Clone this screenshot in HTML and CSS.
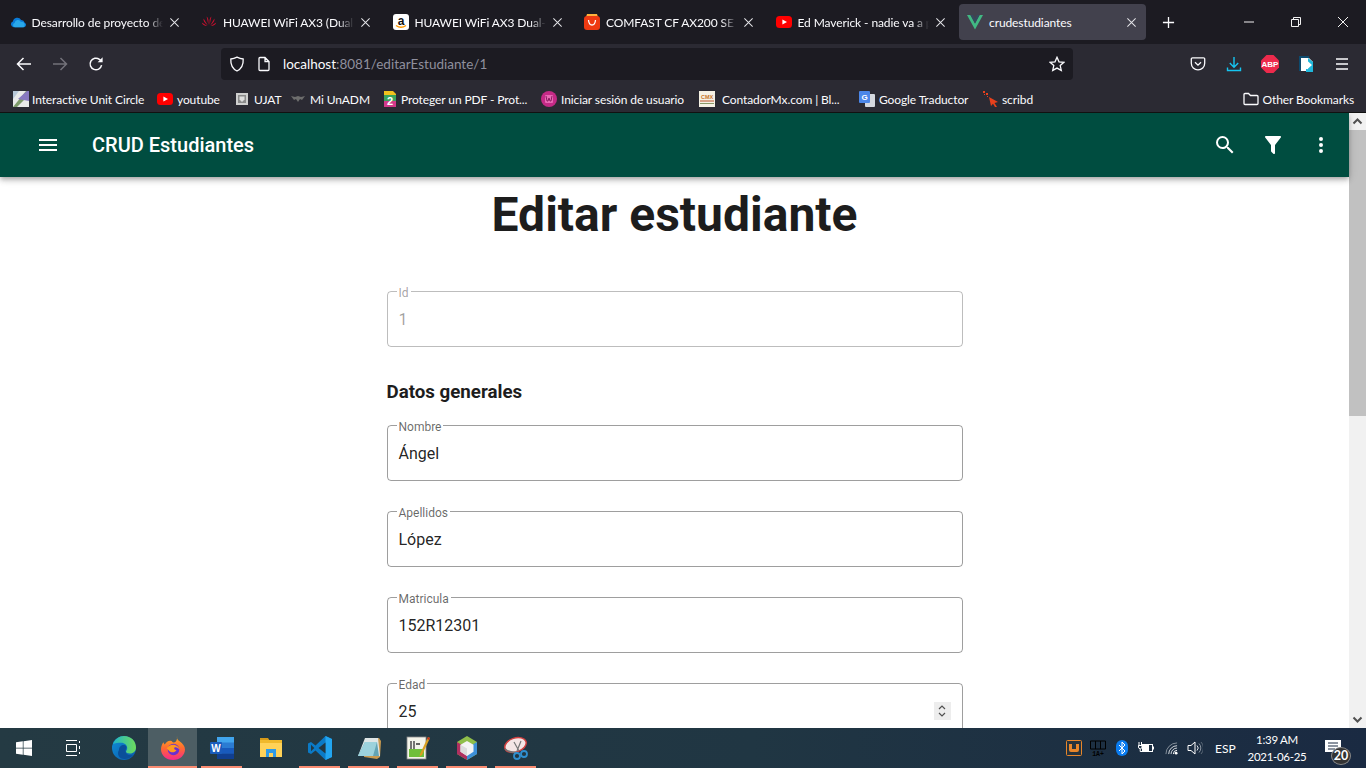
FILE: index.html
```html
<!DOCTYPE html>
<html lang="es">
<head>
<meta charset="utf-8">
<title>crudestudiantes</title>
<link rel="stylesheet" href="styles.css">
</head>
<body>
<div class="browser">
  <div class="tabbar">
    <div class="tabs">
      <div class="tab">
        <svg class="fav" viewBox="0 0 16 16"><path fill="#0a7bd8" d="M3.600 13.200A3 3 0 0 1 2.900 7.400a4.400 4.400 0 0 1 8.200-1.300 3.600 3.600 0 0 1 3.600 2.600 2.400 2.400 0 0 1-.6 4.500z"/><path fill="#29a8ea" d="M5 13.200a2.200 2.200 0 0 1-.4-4.300 3.300 3.300 0 0 1 6.300-.9 2.700 2.700 0 0 1 3.800 2.400 2.400 2.400 0 0 1-1.300 2.800z"/></svg>
        <span class="tab-title">Desarrollo de proyecto de</span>
        <svg class="tab-x" viewBox="0 0 12 12"><path d="M1.500 1.500l9 9M10.500 1.500l-9 9"/></svg>
      </div>
      <div class="tab">
        <svg class="fav" viewBox="0 0 16 16"><g fill="#c7102e"><path d="M7.400 11L5.600 2.600Q7 3.400 7.400 6z"/><path d="M8.600 11l1.800-8.400Q9 3.400 8.600 6z"/><path d="M6.800 11.400L2.600 4.600Q1.600 7.600 6.800 11.400z"/><path d="M9.200 11.400l4.200-6.800q1 3-4.200 6.800z"/><path d="M6.200 12L.8 8.600Q1.600 12 6.200 12z"/><path d="M9.800 12l5.400-3.400Q14.400 12 9.800 12z"/></g></svg>
        <span class="tab-title">HUAWEI WiFi AX3 (Dual-C</span>
        <svg class="tab-x" viewBox="0 0 12 12"><path d="M1.500 1.500l9 9M10.500 1.500l-9 9"/></svg>
      </div>
      <div class="tab">
        <svg class="fav" viewBox="0 0 16 16"><rect width="16" height="16" rx="3" fill="#fff"/><text x="8" y="10.500" font-size="12" font-weight="700" text-anchor="middle" font-family="Liberation Sans" fill="#111">a</text><path d="M3 11.500q5 3.400 10 0" fill="none" stroke="#f90" stroke-width="1.500"/></svg>
        <span class="tab-title">HUAWEI WiFi AX3 Dual-C</span>
        <svg class="tab-x" viewBox="0 0 12 12"><path d="M1.500 1.500l9 9M10.500 1.500l-9 9"/></svg>
      </div>
      <div class="tab">
        <svg class="fav" viewBox="0 0 16 16"><path d="M3 0h10l1 3H2z" fill="#ffb13d"/><rect y="2" width="16" height="14" rx="3" fill="#ee3a12"/><path d="M4.500 6q.4 5 3.500 5t3.500-5" fill="none" stroke="#fff" stroke-width="1.300"/></svg>
        <span class="tab-title">COMFAST CF AX200 SE 30</span>
        <svg class="tab-x" viewBox="0 0 12 12"><path d="M1.500 1.500l9 9M10.500 1.500l-9 9"/></svg>
      </div>
      <div class="tab">
        <svg class="fav" viewBox="0 0 16 16"><rect y="2" width="16" height="12" rx="3.500" fill="#f00"/><path d="M6.400 5.400L11 8l-4.600 2.600z" fill="#fff"/></svg>
        <span class="tab-title">Ed Maverick - nadie va a p</span>
        <svg class="tab-x" viewBox="0 0 12 12"><path d="M1.500 1.500l9 9M10.500 1.500l-9 9"/></svg>
      </div>
      <div class="tab tab-active">
        <svg class="fav" viewBox="0 0 16 16"><path d="M0 1h3.400L8 9.600 12.600 1H16L8 15.400z" fill="#41b883"/><path d="M3.400 1h2.600L8 4.800 10 1h2.600L8 9.600z" fill="#35495e"/></svg>
        <span class="tab-title">crudestudiantes</span>
        <svg class="tab-x" viewBox="0 0 12 12"><path d="M1.500 1.500l9 9M10.500 1.500l-9 9"/></svg>
      </div>
    </div>
    <svg class="newtab" viewBox="0 0 14 14"><path d="M7 1v12M1 7h12"/></svg>
    <div class="winctl">
      <svg viewBox="0 0 12 12"><path d="M1 6h10"/></svg>
      <svg viewBox="0 0 12 12"><path d="M1.500 3.500h7v7h-7zM3.500 3.500v-2h7v7h-2"/></svg>
      <svg viewBox="0 0 12 12"><path d="M1 1l10 10M11 1L1 11"/></svg>
    </div>
  </div>

  <div class="toolbar">
    <div class="navbtns">
      <svg viewBox="0 0 16 16"><path d="M15 8H1.500M7.500 2L1.500 8l6 6"/></svg>
      <svg class="dim" viewBox="0 0 16 16"><path d="M1 8h13.500M8.500 2l6 6-6 6"/></svg>
      <svg viewBox="0 0 16 16"><path d="M13.600 9.200A5.800 5.800 0 1 1 11.400 3.300L13.400 5"/><path class="solid" d="M14.600 1.200v5H9.600z"/></svg>
    </div>
    <div class="urlbar">
      <svg class="url-ico" viewBox="0 0 16 16"><path d="M8 1.200c2 1 4 1.600 6.200 1.800.3 5.800-1.700 9.800-6.200 12-4.500-2.200-6.500-6.200-6.200-12C4 2.800 6 2.200 8 1.200z"/></svg>
      <svg class="url-ico" viewBox="0 0 16 16"><path d="M3 2.500a1 1 0 0 1 1-1h5l4 4V13.500a1 1 0 0 1-1 1H4a1 1 0 0 1-1-1zM9 1.500v4h4"/></svg>
      <div class="url"><span class="host">localhost</span>:8081/editarEstudiante/1</div>
      <svg class="url-ico" viewBox="0 0 16 16"><path d="M8 1.300l2 4.500 4.900.5-3.700 3.300 1.100 4.800L8 12.100l-4.300 2.300 1.100-4.800L1.100 6.300 6 5.800z"/></svg>
    </div>
    <div class="extbtns">
      <svg viewBox="0 0 16 16"><path class="ln" d="M2.500 1.800h11a1.200 1.200 0 0 1 1.200 1.200V7.200A6.700 6.700 0 0 1 1.300 7.200V3a1.200 1.200 0 0 1 1.200-1.200zM5 6.200l3 3 3-3"/></svg>
      <svg viewBox="0 0 16 16"><path d="M8 1v10M3.800 7L8 11.200 12.200 7M1.500 11.500v3h13v-3" fill="none" stroke="#16c4f0" stroke-width="1.400"/></svg>
      <svg class="abp" viewBox="0 0 18 18"><path d="M5.500 0h7L18 5.500v7L12.500 18h-7L0 12.500v-7z" fill="#ed2a4c"/><text x="9" y="12.200" font-size="8" font-weight="700" text-anchor="middle" font-family="Liberation Sans" fill="#fff">ABP</text></svg>
      <svg viewBox="0 0 16 16"><path d="M1 0h10v2H3v13H1z" fill="#0d4a6e"/><path d="M3 2h8l4 4v9H3z" fill="#fff"/><path d="M10 2l5 4v10H8v-3h2V2z" fill="#1fb8dc"/><path d="M4 7h5V4.500L14 9l-5 4.500V11H4z" fill="#fff"/></svg>
      <svg viewBox="0 0 16 16"><path class="ln" d="M2 3h12M2 8h12M2 13h12"/></svg>
    </div>
  </div>

  <div class="bookmarks">
    <div class="bm">
      <svg viewBox="0 0 16 16"><rect width="16" height="16" fill="#e9e9e9"/><path d="M0 16L13 0h3v4L4 16z" fill="#7d9a6a"/><path d="M5 8l9-8h2v10z" fill="#8878c0"/><path d="M0 0h6L0 8z" fill="#b8c8d8"/></svg>
      <span>Interactive Unit Circle</span>
    </div>
    <div class="bm">
      <svg viewBox="0 0 16 16"><rect y="2" width="16" height="12" rx="3.500" fill="#f00"/><path d="M6.400 5.400L11 8l-4.600 2.600z" fill="#fff"/></svg>
      <span>youtube</span>
    </div>
    <div class="bm">
      <svg class="small" viewBox="0 0 12 12"><rect width="12" height="12" fill="#cfcfcf"/><rect x="2" y="2" width="8" height="8" fill="#8a8a8a"/><path d="M3.500 3.500h5v3L6 9 3.500 6.500z" fill="#dedede"/></svg>
      <span>UJAT</span>
    </div>
    <div class="bm">
      <svg class="small" viewBox="0 0 14 12"><path d="M0 3l4 1 3-1 3 1 4-1-3 4-2-1-2 3-2-3-2 1z" fill="#6d6d6d"/></svg>
      <span>Mi UnADM</span>
    </div>
    <div class="bm">
      <svg viewBox="0 0 16 16"><path d="M2 0h9l3 3v13H2z" fill="#f2c11d"/><rect x="2" y="4" width="12" height="12" fill="#3aa35c"/><path d="M2 10h12v6H2z" fill="#d23a8a"/><text x="8" y="14" font-size="11" font-weight="700" text-anchor="middle" font-family="Liberation Sans" fill="#fff">2</text></svg>
      <span>Proteger un PDF - Prot...</span>
    </div>
    <div class="bm">
      <svg viewBox="0 0 16 16"><circle cx="8" cy="8" r="8" fill="#c42a86"/><rect x="4" y="4" width="8" height="8" rx="1" fill="#e868b4"/><path d="M5 5l1 5h1l1-3 1 3h1l1-5" fill="none" stroke="#8a1c60" stroke-width="1"/></svg>
      <span>Iniciar sesión de usuario</span>
    </div>
    <div class="bm">
      <svg viewBox="0 0 16 16"><rect width="16" height="16" fill="#f5f1e4"/><text x="8" y="7.500" font-size="5.500" font-weight="700" text-anchor="middle" font-family="Liberation Sans" fill="#c8742a">CMX</text><path d="M1 10h14" stroke="#b8502a"/><path d="M1 12.500h14" stroke="#8a9a6a"/></svg>
      <span>ContadorMx.com | Bl...</span>
    </div>
    <div class="bm">
      <svg viewBox="0 0 16 16"><rect x="6" y="3" width="10" height="13" rx="1" fill="#d5d8de"/><rect width="11" height="12" rx="1" fill="#4b86e8"/><text x="5.500" y="9" font-size="8" font-weight="700" text-anchor="middle" font-family="Liberation Sans" fill="#fff">G</text></svg>
      <span>Google Traductor</span>
    </div>
    <div class="bm">
      <svg viewBox="0 0 16 16"><path d="M6 6l9 5-3.500 1L14 16h-2l-2-3.200L8 15z" fill="#e8401c"/><path d="M0 0h2v2H0zM3 2h2v2H3zM1 3h1v1H1zM4 5h1v1H4z" fill="#e8401c"/></svg>
      <span>scribd</span>
    </div>
    <div class="bm bm-other">
      <svg viewBox="0 0 16 16"><path class="ln" d="M1 12.500V3.500A1 1 0 0 1 2 2.500h3.500l2 2H14a1 1 0 0 1 1 1v7a1 1 0 0 1-1 1H2a1 1 0 0 1-1-1z"/></svg>
      <span>Other Bookmarks</span>
    </div>
  </div>
</div>

<div class="viewport">
  <div class="page">
    <header class="appbar">
      <svg class="menu-ic" viewBox="0 0 24 24"><path d="M3 18h18v-2H3zm0-5h18v-2H3zm0-7v2h18V6z"/></svg>
      <div class="app-title">CRUD Estudiantes</div>
      <div class="app-actions">
        <svg viewBox="0 0 24 24"><path d="M15.500 14h-.79l-.28-.27A6.470 6.470 0 0 0 16 9.500 6.500 6.500 0 1 0 9.500 16c1.610 0 3.090-.59 4.230-1.570l.27.28v.79l5 4.990L20.490 19zm-6 0C7.010 14 5 11.990 5 9.500S7.010 5 9.500 5 14 7.010 14 9.500 11.990 14 9.500 14z"/></svg>
        <svg viewBox="0 0 24 24"><path d="M14 12v7.880c.04.3-.06.62-.29.830a1 1 0 0 1-1.410 0l-2.010-2.010a1 1 0 0 1-.29-.830V12h-.03L4.210 4.620a1 1 0 0 1 .17-1.400C4.570 3.080 4.780 3 5 3h14c.22 0 .43.080.62.220a1 1 0 0 1 .17 1.400L14.030 12z"/></svg>
        <svg viewBox="0 0 24 24"><path d="M12 16a2 2 0 1 1 0 4 2 2 0 0 1 0-4zm0-6a2 2 0 1 1 0 4 2 2 0 0 1 0-4zm0-6a2 2 0 1 1 0 4 2 2 0 0 1 0-4z"/></svg>
      </div>
    </header>
    <main class="content">
      <h1 class="title">Editar estudiante</h1>
      <div class="form">
        <div class="field field-disabled">
          <label>Id</label>
          <div class="value">1</div>
        </div>
        <h2 class="section">Datos generales</h2>
        <div class="field"><label>Nombre</label><div class="value">Ángel</div></div>
        <div class="field"><label>Apellidos</label><div class="value">López</div></div>
        <div class="field"><label>Matricula</label><div class="value">152R12301</div></div>
        <div class="field">
          <label>Edad</label>
          <div class="value">25</div>
          <div class="spinner">
            <svg viewBox="0 0 10 18"><path d="M2 7l3-3 3 3M2 11l3 3 3-3"/></svg>
          </div>
        </div>
      </div>
    </main>
  </div>
  <div class="scrollbar">
    <svg class="sb-arrow" viewBox="0 0 17 17"><path d="M4.500 10.500l4-4 4 4"/></svg>
    <div class="sb-track"><div class="sb-thumb"></div></div>
    <svg class="sb-arrow" viewBox="0 0 17 17"><path d="M4.500 6.500l4 4 4-4"/></svg>
  </div>
</div>

<footer class="taskbar">
  <div class="task-start">
    <div class="task task-first"><svg viewBox="0 0 16 16"><path fill="#fff" d="M0 2.300l6.800-1v6.400H0zM7.500 1.200L16 0v7.700H7.500zM0 8.400h6.800v6.400L0 13.700zM7.500 8.400H16V16l-8.500-1.200z"/></svg></div>
    <div class="task"><svg viewBox="0 0 16 16"><path d="M1 .5h11M1 15.500h11M1.500 4.500h10v7h-10zM14.500 1v2M14.500 6v3M14.500 12v2" fill="none" stroke="#fff" stroke-width="1"/></svg></div>
    <div class="task task-gap"><svg class="lg" viewBox="0 0 24 24"><defs><linearGradient id="edgeA" x1="0" y1="0" x2="1" y2="1"><stop offset="0" stop-color="#0f8fd8"/><stop offset="1" stop-color="#0a58a8"/></linearGradient><linearGradient id="edgeB" x1="0" y1="0" x2="1" y2="0"><stop offset="0" stop-color="#1fb6c8"/><stop offset="1" stop-color="#6fdc5a"/></linearGradient></defs><circle cx="12" cy="12" r="12" fill="url(#edgeA)"/><path d="M1 8C3 3 7 0 12 0c7 0 12 5 12 11.500 0 3.500-2.500 6-6 6-2.600 0-4-1-4-2 0-.8 1.200-1.200 1.200-3.500 0-2.800-2.700-5.200-6-5.200C5.800 6.800 3 7.200 1 8z" fill="url(#edgeB)"/><path d="M7 14c0-3 2-5 5-5 1.500 0 2.500 1 2.500 2.500 0 1-1 2-1 3.500 0 3 3 5 7.500 4-2 2.500-5 4-8.500 4C7 23 4.500 18 7 14z" fill="#0a4f9a"/></svg></div>
    <div class="task task-active running"><svg class="lg" viewBox="0 0 24 24"><defs><linearGradient id="ffA" x1="0" y1="0" x2="0" y2="1"><stop offset="0" stop-color="#ffb020"/><stop offset=".5" stop-color="#ff6a30"/><stop offset="1" stop-color="#f5288c"/></linearGradient></defs><path d="M16 0c-.5 2.500.6 3.700 2.600 5.300C21.600 7.600 24 10 24 13.500 24 19.300 18.800 24 12 24S0 19.300 0 13.500C0 11 .8 8.300 2.500 6.300c.2 1 .6 1.800 1.300 2.300C5 5.800 7.500 4.600 9.500 4.800c2 .2 1.500 1.600 3.500 1.600 2 0 3.500-3 3-6.400z" fill="url(#ffA)"/><circle cx="12.500" cy="13.500" r="5.800" fill="#6a2fd0"/><path d="M5.500 13c1.500-3 5-5 9-3.800 2.300.7 3.800 2.500 4 4.600-1-1.800-3-2.800-5-2.400-.8 1.200 0 2.500 2 2.500-1.200 2.400-4 3-6.300 1.800C7.700 14.900 7 13 5.500 13z" fill="#ff9a1f"/></svg></div>
    <div class="task running"><svg class="lg" viewBox="0 0 24 24"><rect x="7" y="1" width="17" height="22" rx="1" fill="#2b7cd3"/><rect x="7" y="1" width="17" height="5.500" fill="#41a5ee"/><rect x="7" y="12" width="17" height="5.500" fill="#185abd"/><rect x="7" y="17.500" width="17" height="5.500" fill="#103f91"/><rect y="6" width="12" height="12" rx="1" fill="#1a5cbc"/><text x="6" y="15.500" font-size="10" font-weight="700" text-anchor="middle" font-family="Liberation Sans" fill="#fff">W</text></svg></div>
    <div class="task"><svg class="lg" viewBox="0 0 24 24"><path d="M1 2h8l2 3H1z" fill="#d79a19"/><rect x="1" y="4" width="22" height="4" fill="#f0b92c"/><rect x="1" y="7" width="22" height="14" fill="#ffd258"/><path d="M7 21v-8h10v8h-3v-4h-4v4z" fill="#2f9be6"/></svg></div>
    <div class="task running"><svg class="lg" viewBox="0 0 24 24"><path d="M17.500 0L24 3v18l-6.500 3L7.500 14.500 3 18l-3-1.500v-9L3 6l4.500 3.500z" fill="#0b7ac6"/><path d="M17.500 0L24 3v18l-6.500 3z" fill="#22a5f0"/><path d="M17.500 6.500v11L10.500 12z" fill="#223640"/><path d="M3 8.800v6.400L6.300 12z" fill="#223640"/></svg></div>
    <div class="task running"><svg class="lg" viewBox="0 0 24 24"><path d="M8 2h14l2 3-1 16-3 2L7 21z" fill="#c89a50"/><path d="M8 2h13l2 18H1z" fill="#dfe6e6"/><path d="M8 6h12l2 14H1z" fill="#62a4b4"/><path d="M8 6h12l-4 14H1z" fill="#9cd2dc"/></svg></div>
    <div class="task running"><svg class="lg" viewBox="0 0 24 24"><rect x="1" y="1" width="19" height="22" fill="#f4f4ea" stroke="#888" stroke-width=".8"/><path d="M3 13h15v8H3z" fill="#6fbf3a"/><path d="M5 5v8M8 5v8M10 8h4" stroke="#333" stroke-width="1.300"/><path d="M14 18L22 1l2 1-8 17-2.500 1.500z" fill="#d9a020"/><path d="M22 1l2 1-1 2-2-1z" fill="#c03020"/></svg></div>
    <div class="task running"><svg class="lg" viewBox="0 0 24 24"><path d="M12 0l10 6v12l-10 6-10-6V6z" fill="#8fbe4a"/><path d="M2 6l10 6v12L2 18z" fill="#b03060"/><path d="M22 6l-10 6v12l10-6z" fill="#3d8fd8"/><path d="M12 5l6.500 3.700v7L12 20l-6.500-4.300v-7z" fill="#f4f4f4"/><path d="M12 12.500v7.500l-6.500-4.300v-7z" fill="#dcdcdc"/></svg></div>
    <div class="task running"><svg class="lg" viewBox="0 0 24 24"><ellipse cx="11.500" cy="9" rx="11" ry="7" fill="#f4e6e6" stroke="#d04040" stroke-width="1.500" transform="rotate(-18 11.500 9)"/><path d="M1 13q5 4 12 3" fill="none" stroke="#777" stroke-width="1.500"/><path d="M10 6l5 9M17 5l-4 10" stroke="#777" stroke-width="1.200"/><circle cx="13" cy="20" r="3" fill="none" stroke="#2f8fd0" stroke-width="1.800"/><circle cx="20" cy="18" r="3" fill="none" stroke="#2f8fd0" stroke-width="1.800"/></svg></div>
  </div>
  <div class="tray">
    <svg class="t-ico t8" viewBox="0 0 16 16"><rect x=".5" y=".5" width="15" height="15" rx="1" fill="#26333d" stroke="#e8862a"/><path d="M3 4v6a2 2 0 0 0 2 2h6a2 2 0 0 0 2-2V4h-3v5H6V4z" fill="#e8862a"/></svg>
    <svg class="t-ico t10" viewBox="0 0 16 16"><path d="M.5 1h15v8H.5zM5.500 1v8M10.500 1v8" fill="none" stroke="#000"/><text x="8" y="15.500" font-size="6.500" font-weight="700" text-anchor="middle" font-family="Liberation Mono" fill="#000">1A+</text></svg>
    <svg class="t-blue" viewBox="0 0 12 16"><rect width="12" height="16" rx="6" fill="#0a7cf0"/><path d="M3 5l6 6-3 3V2l3 3-6 6" fill="none" stroke="#fff" stroke-width="1"/></svg>
    <svg class="t-ico t11" viewBox="0 0 16 16"><path d="M1 2v4M3.500 2v4M.5 5.500h3.500v1.500a1.700 1.700 0 0 1-3.500 0zM2.200 9v2.500H4" fill="none" stroke="#fff"/><rect x="4.500" y="4.500" width="10" height="7" fill="none" stroke="#fff"/><rect x="5" y="5" width="6" height="6" fill="#fff"/><path d="M15 6.500h1v3h-1z" fill="#fff"/></svg>
    <svg class="t-wifi" viewBox="0 0 14 14"><path d="M1 13A12 12 0 0 1 13 1" stroke="#8d97a2"/><path d="M4 13a9 9 0 0 1 9-9M6.500 13a6.500 6.500 0 0 1 6.500-6.500" stroke="#dfe3e7"/><path d="M9 13a4 4 0 0 1 4-4" stroke="#fff"/><circle cx="12" cy="12" r="1.500" fill="#fff"/></svg>
    <svg class="t-ico t12" viewBox="0 0 16 16"><path d="M1 5.500h3L8 2v12l-4-3.500H1z" fill="none" stroke="#fff"/><path d="M10 5.500a3.500 3.500 0 0 1 0 5" fill="none" stroke="#dfe3e7"/><path d="M12 3.500a6.500 6.500 0 0 1 0 9" fill="none" stroke="#8d97a2"/><path d="M14 2a8.500 8.500 0 0 1 0 12" fill="none" stroke="#5d6a78"/></svg>
    <div class="lang">ESP</div>
    <div class="clock"><div>1:39 AM</div><div>2021-06-25</div></div>
    <div class="notif">
      <svg viewBox="0 0 16 12"><path d="M0 0h16v12H0z" fill="#fff"/><path d="M3 3h10M3 6h10M3 9h7" stroke="#1a2b42"/></svg>
      <span class="badge">20</span>
    </div>
  </div>
</footer>
</body>
</html>
```
FILE: styles.css
```css
* { box-sizing: border-box; }
html, body { margin: 0; padding: 0; }
body {
  width: 1366px;
  height: 768px;
  overflow: hidden;
  display: flex;
  flex-direction: column;
  font-family: "Roboto", sans-serif;
  background: #fff;
}

/* browser chrome */
.browser { flex: none; font-family: "Lato", "Open Sans", sans-serif; color: #fbfbfe; }
.tabbar {
  height: 44px;
  background: #1c1b22;
  display: flex;
  align-items: center;
  padding-left: 1.500px;
}
.tabs { display: flex; gap: 4.500px; }
.tab {
  width: 187px;
  height: 36px;
  display: flex;
  align-items: center;
  gap: 6px;
  padding: 0 9px 0 8px;
  border-radius: 4px;
  font-size: 12px;
  letter-spacing: -.1px;
}
.tab-active { background: #42414d; }
.fav { width: 16px; height: 16px; flex: none; }
.tab-title {
  flex: 1;
  min-width: 0;
  white-space: nowrap;
  -webkit-mask-image: linear-gradient(to right, #000 88%, transparent 100%);
  mask-image: linear-gradient(to right, #000 88%, transparent 100%);
}
.tab-active .tab-title { -webkit-mask-image: none; mask-image: none; }
.tab-x { width: 11px; height: 11px; flex: none; fill: none; stroke: #e4e4e8; stroke-width: 1.100; }
.newtab { width: 13px; height: 13px; margin-left: 16px; fill: none; stroke: #fbfbfe; stroke-width: 1.400; flex: none; }
.winctl { margin-left: auto; display: flex; padding-right: 17px; gap: 35px; }
.winctl svg { width: 12px; height: 12px; fill: none; stroke: #f2f2f2; stroke-width: 1; }

.toolbar {
  height: 44px;
  background: #2b2a33;
  display: flex;
  align-items: center;
  padding-bottom: 4px;
}
.navbtns { display: flex; gap: 20px; padding-left: 16px; width: 221px; }
.navbtns svg { width: 16px; height: 16px; fill: none; stroke: #fbfbfe; stroke-width: 1.500; }
.navbtns svg.dim { stroke: #73727a; }
.navbtns .solid { fill: #fbfbfe; stroke: none; }
.urlbar {
  width: 852px;
  height: 32px;
  background: #1c1b22;
  border-radius: 4px;
  display: flex;
  align-items: center;
  padding: 0 8px;
  gap: 11px;
}
.url-ico { width: 16px; height: 16px; flex: none; fill: none; stroke: #fbfbfe; stroke-width: 1.300; }
.url { flex: 1; font-size: 13.500px; color: #8f8f9d; white-space: nowrap; }
.host { color: #fbfbfe; }
.extbtns { display: flex; align-items: center; margin-left: auto; gap: 20px; padding-right: 16px; }
.extbtns svg { width: 16px; height: 16px; flex: none; }
.extbtns svg.abp { width: 18px; height: 18px; margin: 0 -1px; }
.ln { fill: none; stroke: #fbfbfe; stroke-width: 1.300; }

.bookmarks {
  height: 25px;
  background: #2b2a33;
  border-bottom: 1px solid #111;
  display: flex;
  align-items: center;
  font-size: 12px;
  letter-spacing: -.1px;
  padding: 0 12px 2px 13px;
}
.bm { display: flex; align-items: center; gap: 4px; white-space: nowrap; flex: none; }
.bm > svg { width: 16px; height: 16px; flex: none; }
.bm > svg.small { width: 14px; height: 12px; margin-right: 1px; }
.bm:nth-child(1) { width: 144px; gap: 3px; }
.bm:nth-child(2) { width: 78px; }
.bm:nth-child(3) { width: 56px; }
.bm:nth-child(4) { width: 91px; }
.bm:nth-child(5) { width: 159px; gap: 3px; }
.bm:nth-child(6) { width: 158px; }
.bm:nth-child(7) { width: 160px; gap: 7px; }
.bm:nth-child(8) { width: 124px; }
.bm:nth-child(9) { gap: 3px; }
.bm-other { margin-left: auto; }

/* page */
.viewport {
  flex: 1;
  min-height: 0;
  display: flex;
  overflow: hidden;
}
.page { flex: 1; min-width: 0; display: flex; flex-direction: column; }
.appbar {
  height: 64px;
  flex: none;
  background: #004d40;
  color: #fff;
  display: flex;
  align-items: center;
  padding: 0 16px 0 32px;
  position: relative;
  box-shadow: 0 2px 4px -1px rgba(0,0,0,.2), 0 4px 5px 0 rgba(0,0,0,.14), 0 1px 10px 0 rgba(0,0,0,.12);
}
.menu-ic { width: 24px; height: 24px; fill: #fff; margin-left: 4px; flex: none; }
.app-title { font-size: 20px; font-weight: 500; margin-left: 32px; }
.app-actions { margin-left: auto; display: flex; gap: 24px; }
.app-actions svg { width: 24px; height: 24px; fill: #fff; }
.content { padding-top: 9px; }
.title {
  margin: 0 0 47px;
  font-size: 48px;
  line-height: 58px;
  font-weight: 700;
  text-align: center;
  color: #1d1d1d;
}
.form { width: 576px; margin: 0 auto; }
.section {
  margin: 33px 0 21px;
  font-size: 18.720px;
  line-height: 24px;
  font-weight: 700;
  color: #1d1d1d;
}
.field {
  height: 56px;
  border: 1px solid rgba(0,0,0,.38);
  border-radius: 4px;
  display: flex;
  align-items: center;
  padding: 0 11px;
  position: relative;
  margin-bottom: 30px;
  font-size: 16px;
  color: rgba(0,0,0,.87);
}
.field label {
  position: absolute;
  left: 9px;
  top: -5px;
  padding: 0 2px;
  background: #fff;
  font-size: 12px;
  line-height: 12px;
  color: rgba(0,0,0,.6);
}
.field-disabled { border-color: rgba(0,0,0,.26); color: rgba(0,0,0,.38); margin-bottom: 0; }
.field-disabled label { color: rgba(0,0,0,.38); }
.value { flex: 1; }
.spinner {
  width: 17px;
  height: 18px;
  background: #ededed;
  display: flex;
  justify-content: center;
}
.spinner svg { width: 10px; height: 18px; fill: none; stroke: #505050; stroke-width: 1.200; }

/* scrollbar */
.scrollbar {
  width: 17px;
  flex: none;
  background: #f1f1f1;
  display: flex;
  flex-direction: column;
}
.sb-arrow { width: 17px; height: 17px; flex: none; fill: none; stroke: #505050; stroke-width: 2; }
.sb-track { flex: 1; }
.sb-thumb { height: 286px; background: #c1c1c1; }

/* taskbar */
.taskbar {
  height: 40px;
  flex: none;
  background: linear-gradient(to right, #243a43 0%, #203643 55%, #1a2a42 100%);
  display: flex;
  align-items: center;
  justify-content: space-between;
  color: #fff;
  font-family: "Lato", "Open Sans", sans-serif;
  font-size: 12px;
}
.task-start { display: flex; height: 100%; }
.task {
  width: 49px;
  height: 40px;
  display: flex;
  align-items: center;
  justify-content: center;
  position: relative;
}
.task-first { width: 48px; }
.task svg { width: 16px; height: 16px; }
.task svg.lg { width: 24px; height: 24px; }
.task-gap { margin-left: 2px; }
.task-active { background: #4d5e64; }
.running::after {
  content: "";
  position: absolute;
  left: 4px;
  right: 4px;
  bottom: 0;
  height: 2px;
  background: #fa8c72;
}
.task-active::after { left: 0; right: 0; }
.tray { display: flex; align-items: center; height: 100%; padding-right: 16px; }
.tray svg { flex: none; }
.t-ico { width: 16px; height: 16px; }
.t8 { margin-right: 8px; }
.t10 { margin-right: 10px; }
.t11 { margin-right: 11px; }
.t12 { margin-right: 12px; }
.t-blue { width: 12px; height: 16px; margin-right: 10px; }
.t-wifi { width: 13px; height: 13px; margin-right: 9px; fill: none; stroke-width: 1; }
.lang { width: 23px; }
.clock { width: 78px; text-align: center; line-height: 17px; font-size: 11.500px; letter-spacing: -.3px; }
.notif { position: relative; width: 28px; height: 24px; margin-left: 6px; align-self: center; }
.notif svg { position: absolute; left: 3px; top: 4px; width: 16px; height: 12px; }
.badge {
  position: absolute;
  left: 9px;
  top: 11px;
  width: 20px;
  height: 18px;
  border-radius: 50%;
  background: #333;
  border: 1px solid #888;
  text-align: center;
  font-size: 12.500px;
  line-height: 16px;
  font-weight: 700;
}
```
